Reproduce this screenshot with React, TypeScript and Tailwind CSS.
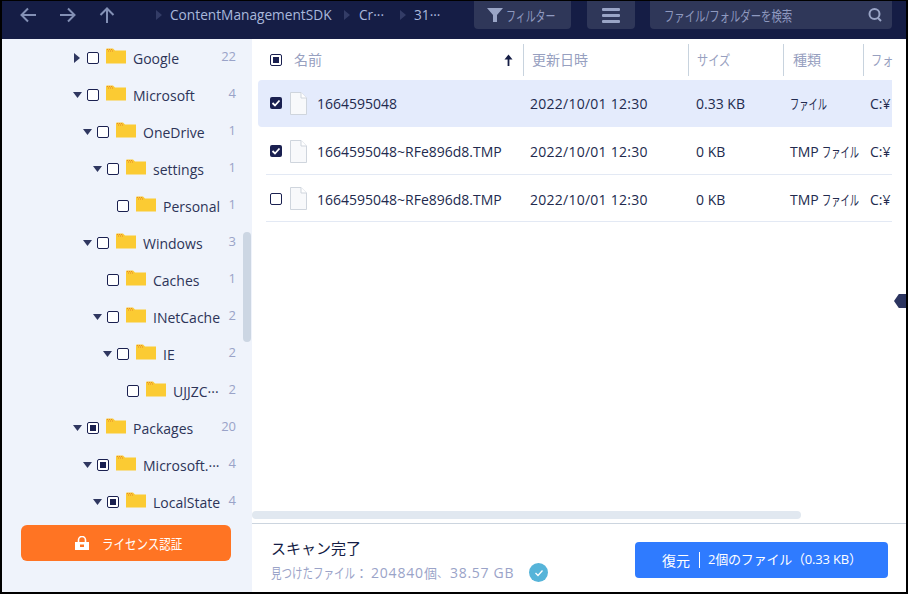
import React from "react";

const latin = "font-['Open_Sans','Noto_Sans_CJK_JP',sans-serif]";

const Folder = () => (
  <svg width="20" height="16" viewBox="0 0 20 16" className="shrink-0">
    <path d="M0 1.5 Q0 0.5 1 0.5 H7 L9 2.5 H20 V15.5 H0 Z" fill="#fbcb33" />
    <path d="M1 1.5 H7 M2 3 H8" stroke="#e8862a" strokeWidth="1" strokeDasharray="1 1" />
  </svg>
);

const Check = ({ state }: { state: "none" | "mixed" | "checked" }) => {
  if (state === "checked")
    return (
      <span className="w-[12px] h-[12px] shrink-0 rounded-[2px] bg-[#1a2050] flex items-center justify-center">
        <svg width="10" height="10" viewBox="0 0 10 10">
          <path d="M1.5 5 L4 7.5 L8.5 2.5" stroke="#fff" strokeWidth="1.8" fill="none" />
        </svg>
      </span>
    );
  return (
    <span className="w-[12px] h-[12px] shrink-0 rounded-[2px] border border-[#1a2050] bg-white flex items-center justify-center">
      {state === "mixed" && <span className="w-[6px] h-[6px] bg-[#1a2050]" />}
    </span>
  );
};

type Row = { name: string; n: string; pad: string; arrow?: "r" | "d"; st: "none" | "mixed" };
const rows: Row[] = [
  { name: "Google", n: "22", pad: "pl-[72px]", arrow: "r", st: "none" },
  { name: "Microsoft", n: "4", pad: "pl-[71px]", arrow: "d", st: "none" },
  { name: "OneDrive", n: "1", pad: "pl-[81px]", arrow: "d", st: "none" },
  { name: "settings", n: "1", pad: "pl-[91px]", arrow: "d", st: "none" },
  { name: "Personal", n: "1", pad: "pl-[115px]", st: "none" },
  { name: "Windows", n: "3", pad: "pl-[81px]", arrow: "d", st: "none" },
  { name: "Caches", n: "1", pad: "pl-[105px]", st: "none" },
  { name: "INetCache", n: "2", pad: "pl-[91px]", arrow: "d", st: "none" },
  { name: "IE", n: "2", pad: "pl-[101px]", arrow: "d", st: "none" },
  { name: "UJJZC···", n: "2", pad: "pl-[125px]", st: "none" },
  { name: "Packages", n: "20", pad: "pl-[71px]", arrow: "d", st: "mixed" },
  { name: "Microsoft.···", n: "4", pad: "pl-[81px]", arrow: "d", st: "mixed" },
  { name: "LocalState", n: "4", pad: "pl-[91px]", arrow: "d", st: "mixed" },
];

const TreeRow = ({ r }: { r: Row }) => (
  <div className={`h-[37px] flex items-center pr-[16px] ${r.pad}`}>
    {r.arrow === "r" && (
      <svg width="6" height="10" viewBox="0 0 6 10" className="mr-[7px] shrink-0">
        <path d="M0 0 L6 5 L0 10 Z" fill="#2f3760" />
      </svg>
    )}
    {r.arrow === "d" && (
      <svg width="9" height="6" viewBox="0 0 9 6" className="mr-[5px] shrink-0">
        <path d="M0 0 H9 L4.5 6 Z" fill="#2f3760" />
      </svg>
    )}
    <Check state={r.st} />
    <span className="ml-[7px] -mt-[3px]">
      <Folder />
    </span>
    <span className="ml-[7px] mt-[1px] text-[14px] text-[#2d3458] whitespace-nowrap">{r.name}</span>
    <span className="ml-auto -mt-[1px] text-[13px] text-[#9aa3c8]">{r.n}</span>
  </div>
);

const FileIcon = () => (
  <svg width="17" height="23" viewBox="0 0 17 23" className="shrink-0">
    <path d="M0.5 0.5 H11 L16.5 6 V22.5 H0.5 Z" fill="#f8f9fb" stroke="#cfd5dd" />
    <path d="M11 0.5 V6 H16.5" fill="#fff" stroke="#cfd5dd" />
  </svg>
);

const Triangle = ({ cls }: { cls: string }) => (
  <svg width="6" height="10" viewBox="0 0 6 10" className={`shrink-0 ${cls}`}>
    <path d="M0 0 L6 5 L0 10 Z" fill="#333c66" />
  </svg>
);

const fileRows = [
  { name: "1664595048", size: "0.33 KB", pre: "", st: "checked" as const, cls: "bg-[#e4ebfc] rounded-l-[4px] h-[47px] pb-[1px] ml-[6px] pl-[12px]" },
  { name: "1664595048~RFe896d8.TMP", size: "0 KB", pre: "TMP ", st: "checked" as const, cls: "h-[48px] pt-[1px] ml-[14px] pl-[4px] border-b border-[#e3e9f4]" },
  { name: "1664595048~RFe896d8.TMP", size: "0 KB", pre: "TMP ", st: "none" as const, cls: "h-[47px] pt-[1px] ml-[14px] pl-[4px] border-b border-[#e3e9f4]" },
];

const Sep = () => <span className="w-px h-[32px] bg-[#c8d3de] shrink-0" />;

export default function App() {
  return (
    <div className={`w-[908px] h-[594px] bg-black pt-px pl-[2px] pr-[2px] pb-[2px] overflow-hidden ${latin}`}>
      <div className="relative w-full h-full flex flex-col bg-white overflow-hidden">
        <header className="h-[38px] shrink-0 bg-[#151d45] flex items-start">
          <div className="w-[154px] shrink-0 flex items-center h-[28px] pl-[18px] gap-[24px] text-[#8390b5]">
            <svg width="16" height="16" viewBox="0 0 16 16" className="shrink-0">
              <path d="M16 8 H2 M8 1.5 L1.5 8 L8 14.5" stroke="currentColor" strokeWidth="2" fill="none" />
            </svg>
            <svg width="16" height="16" viewBox="0 0 16 16" className="shrink-0">
              <path d="M0 8 H14 M8 1.5 L14.5 8 L8 14.5" stroke="currentColor" strokeWidth="2" fill="none" />
            </svg>
            <svg width="16" height="16" viewBox="0 0 16 16" className="shrink-0 -ml-[1px]">
              <path d="M8 16 V2 M1.5 8 L8 1.5 L14.5 8" stroke="currentColor" strokeWidth="2" fill="none" />
            </svg>
          </div>
          <div className="w-[318px] shrink-0 h-[28px] flex items-center text-[13.7px] text-[#a9b8dc] whitespace-nowrap">
            <Triangle cls="mr-[8px]" />
            <span className="w-[174px] shrink-0">ContentManagementSDK</span>
            <Triangle cls="mr-[9px]" />
            <span className="w-[41px] shrink-0">Cr···</span>
            <Triangle cls="mr-[8px]" />
            <span>31···</span>
          </div>
          <div className="w-[97px] h-[28px] shrink-0 bg-[#2f3759] rounded-b-[4px] flex items-center pl-[13px] text-[14px] text-[#8f9ac0] whitespace-nowrap overflow-hidden">
            <svg width="16" height="16" viewBox="0 0 16 16" className="mr-[3px] shrink-0">
              <path d="M0 1 H16 L10 8 V15 H6 V8 Z" fill="#9aa5c6" />
            </svg>
            <span className="inline-block origin-left scale-x-[0.71] mr-[-20px]">フィルター</span>
          </div>
          <div className="w-[48px] h-[28px] ml-[16px] shrink-0 bg-[#2f3759] rounded-b-[4px] flex flex-col items-center justify-center gap-[3px]">
            <span className="w-[18px] h-[3px] bg-[#9aa5c6] rounded-[1px]" />
            <span className="w-[18px] h-[3px] bg-[#9aa5c6] rounded-[1px]" />
            <span className="w-[18px] h-[3px] bg-[#9aa5c6] rounded-[1px]" />
          </div>
          <div className="w-[242px] h-[28px] ml-[15px] shrink-0 bg-[#2f3759] rounded-b-[4px] flex items-center pl-[14px] pr-[9px] text-[14px] text-[#8f9ac0] whitespace-nowrap">
            <span className="inline-block origin-left scale-x-[0.74] mr-[-44px]">ファイル/フォルダーを検索</span>
            <svg width="16" height="16" viewBox="0 0 16 16" className="ml-auto shrink-0">
              <circle cx="7.5" cy="7" r="5" stroke="#9aa5c6" strokeWidth="2" fill="none" />
              <path d="M11 11 L14 14" stroke="#9aa5c6" strokeWidth="2" />
            </svg>
          </div>
        </header>

        <div className="flex flex-1 min-h-0">
          <aside className="relative w-[250px] shrink-0 bg-[#eff3fb] flex flex-col">
            <div className="h-[486px] overflow-hidden shrink-0">
              {rows.map((r) => (
                <TreeRow key={r.name} r={r} />
              ))}
            </div>
            <div className="ml-[19px] w-[210px] h-[36px] rounded-[6px] bg-[#ff7423] flex items-center pl-[54px] text-[14px] text-white whitespace-nowrap">
              <svg width="14" height="14" viewBox="0 0 14 14" className="mr-[13px] shrink-0">
                <path d="M3.5 6 V4 A3.5 3.5 0 0 1 10.5 4 V6" stroke="#fff" strokeWidth="1.6" fill="none" />
                <path d="M0 6 H14 V14 H0 Z M5 8.5 V11 H9 V8.5 Z" fill="#fff" fillRule="evenodd" />
              </svg>
              <span className="inline-block origin-left scale-x-[0.82] mr-[-18px]">ライセンス認証</span>
            </div>
            <span className="absolute left-[241px] top-[193px] w-[8px] h-[110px] rounded-[4px] bg-[#ccd6e3]" />
          </aside>

          <main className="flex-1 min-w-0 flex flex-col">
            <div className="h-[41px] shrink-0 flex items-center text-[14px] text-[#97a0c0] whitespace-nowrap overflow-hidden pr-[14px]">
              <span className="ml-[18px]"><Check state="mixed" /></span>
              <span className="ml-[12px] w-[229px] shrink-0 flex items-center">
                名前
                <svg width="9" height="12" viewBox="0 0 9 12" className="ml-auto mr-[10px]">
                  <path d="M4.5 12 V2" stroke="#151d45" strokeWidth="1.8" fill="none" />
                  <path d="M0.5 5.5 L4.5 0.5 L8.5 5.5 Z" fill="#151d45" />
                </svg>
              </span>
              <Sep />
              <span className="pl-[8px] w-[164px] shrink-0">更新日時</span>
              <Sep />
              <span className="pl-[8px] w-[94px] shrink-0">
                <span className="inline-block origin-left scale-x-[0.8]">サイズ</span>
              </span>
              <Sep />
              <span className="pl-[9px] w-[79px] shrink-0">種類</span>
              <Sep />
              <span className="pl-[7px]">
                <span className="inline-block origin-left scale-x-[0.8]">フォ</span>
              </span>
            </div>
            <div className="flex-1 min-h-0 pr-[14px] overflow-hidden">
              {fileRows.map((f, i) => (
                <div key={i} className={`flex items-center text-[14px] text-[#222a4e] whitespace-nowrap overflow-hidden ${f.cls}`}>
                  <Check state={f.st} />
                  <span className="ml-[8px]"><FileIcon /></span>
                  <span className="ml-[10px] mt-[1px] w-[213px] shrink-0">{f.name}</span>
                  <span className="mt-[1px] w-[166px] shrink-0 tracking-[0.25px]">2022/10/01 12:30</span>
                  <span className="mt-[1px] w-[94px] shrink-0">{f.size}</span>
                  <span className="mt-[1px] w-[80px] shrink-0 text-[14px]">
                    {f.pre}
                    <span className="inline-block origin-left scale-x-[0.66]">ファイル</span>
                  </span>
                  <span className="mt-[1px]">C:¥</span>
                </div>
              ))}
            </div>
            <div className="h-[4px] shrink-0" />
            <div className="h-[8px] w-[549px] shrink-0 rounded-[4px] bg-[#e1e8f0]" />
            <div className="h-[4px] shrink-0" />
            <footer className="h-[69px] shrink-0 border-t border-[#ccd5df] flex items-start pl-[19px] pr-[18px]">
              <div className="pt-[12px]">
                <div className="text-[15px] leading-[24px] text-[#151d45]">スキャン完了</div>
                <div className="flex items-center text-[14px] leading-[18px] mt-[3px] text-[#9aa3c8] whitespace-nowrap">
                  <span className="inline-block origin-left scale-x-[0.75] mr-[-28px]">見つけたファイル</span>
                  <span className="w-[16px] shrink-0 text-[13px]">：</span>
                  <span className="tracking-[0.8px] w-[53px] shrink-0">204840</span>
                  <span className="text-[13px]">個</span>
                  <span className="w-[11px] shrink-0 text-[11px]">、</span>
                  <span className="tracking-[0.7px] w-[68px] ml-[2px] shrink-0">38.57 GB</span>
                  <span className="ml-[11px] w-[19px] h-[19px] rounded-full bg-[#56b4d9] flex items-center justify-center">
                    <svg width="10" height="10" viewBox="0 0 10 10">
                      <path d="M1.5 5 L4 7.5 L8.5 2.5" stroke="#fff" strokeWidth="1.3" fill="none" />
                    </svg>
                  </span>
                </div>
              </div>
              <div className="ml-auto mt-[18px] w-[253px] h-[36px] rounded-[4px] bg-[#2f7bff] flex items-center pl-[27px] text-[14px] text-white whitespace-nowrap">
                復元
                <span className="w-px h-[16px] bg-white mx-[9px]" />
                <span className="text-[13px] tracking-[-0.2px] ml-[-1px]">2個のファイル（0.33 KB）</span>
              </div>
            </footer>
          </main>
        </div>

        <span className="absolute right-0 top-[293px] w-[12px] h-[14px] bg-[#2c3560] [clip-path:polygon(0_50%,40%_0,100%_0,100%_100%,40%_100%)]" />
      </div>
    </div>
  );
}
